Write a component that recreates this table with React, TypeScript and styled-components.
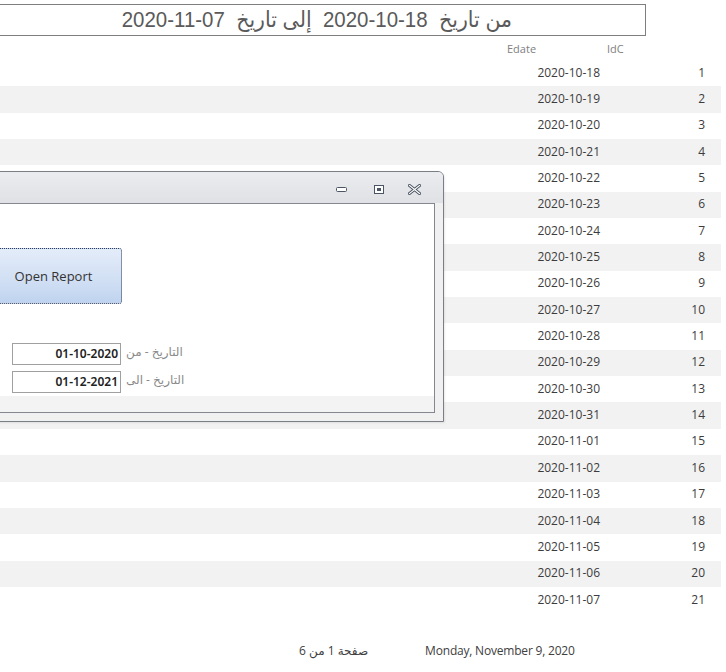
import React from "react";
import styled, { createGlobalStyle } from "styled-components";

const GlobalStyle = createGlobalStyle`
  body {
    margin: 0;
    background: #ffffff;
    font-family: "Open Sans", "DejaVu Sans", sans-serif;
  }
`;

const Page = styled.div`
  position: relative;
  width: 726px;
  height: 672px;
  overflow: hidden;
  background: #ffffff;
`;

const TitleBox = styled.div`
  margin: 4px 0 0 -12px;
  width: 658px;
  height: 32px;
  box-sizing: border-box;
  border: 1px solid #7f7f7f;
  display: flex;
  align-items: center;
  justify-content: center;
`;

const TitleText = styled.span`
  display: inline-block;
  direction: rtl;
  transform: scaleX(0.93);
  font-family: "Liberation Sans", "DejaVu Sans", sans-serif;
  font-size: 22px;
  color: #5a5a5a;
  white-space: pre;
`;

const LtrDate = styled.span`
  direction: ltr;
  unicode-bidi: isolate;
`;

const Grid = styled.div`
  width: 721px;
  display: grid;
  grid-template-columns: 1fr 100px 105px 16px;
`;

const HeaderRow = styled(Grid)`
  height: 24px;
  align-items: center;
  font-size: 11px;
  color: #808080;
  padding-top: 1px;
  box-sizing: border-box;
`;

const HeadCell = styled.div`
  padding-left: 7px;
`;

const Row = styled(Grid)<{ $striped: boolean }>`
  height: 26.35px;
  align-items: center;
  padding-bottom: 2px;
  box-sizing: border-box;
  background: ${(p) => (p.$striped ? "#f2f2f2" : "#ffffff")};
  font-size: 12px;
  color: #3c3c3c;
`;

const Cell = styled.div`
  text-align: right;
`;

const Footer = styled.div`
  margin-top: 29px;
  display: flex;
  align-items: center;
  font-size: 12px;
  color: #404040;
  white-space: nowrap;
`;

const PageNo = styled.div`
  margin-left: 299px;
  direction: rtl;
`;

const PrintDate = styled.div`
  margin-left: 57px;
  letter-spacing: -0.2px;
`;

const Dialog = styled.div`
  position: absolute;
  left: -16px;
  top: 171px;
  width: 460px;
  height: 251px;
  box-sizing: border-box;
  border: 1px solid #7a7e85;
  border-radius: 0 6px 0 0;
  background: #f0f0f0;
  display: flex;
  flex-direction: column;
  box-shadow: 1px 1px 2px rgba(0, 0, 0, 0.08);
`;

const TitleBar = styled.div`
  height: 31px;
  flex-shrink: 0;
  border-radius: 0 5px 0 0;
  background: linear-gradient(#ebecef, #dfe1e5);
  display: flex;
  align-items: center;
  justify-content: flex-end;
  padding: 3px 22px 0 0;
  box-sizing: border-box;
`;

const BarButton = styled.span<{ $gap: number }>`
  display: flex;
  margin-left: ${(p) => p.$gap}px;
`;

const Client = styled.div`
  flex: 1;
  margin: 0 8px 8px 8px;
  border: 1px solid #828790;
  background: #ffffff;
  display: flex;
  flex-direction: column;
`;

const ClientBody = styled.div`
  flex: 1;
  padding: 44px 0 0 0;
  display: flex;
  flex-direction: column;
`;

const ClientFoot = styled.div`
  height: 16px;
  background: #f3f3f3;
`;

const ReportButton = styled.button`
  margin-left: -9px;
  width: 137px;
  height: 56px;
  box-sizing: border-box;
  border: 1px dotted #2f3d58;
  border-radius: 3px;
  background: linear-gradient(#e3ecf9, #d2e0f4 55%, #bfd3ef);
  font-family: "Open Sans", sans-serif;
  font-size: 13px;
  color: #333333;
  padding: 0;
`;

const Fields = styled.div`
  margin: 39px 0 0 18px;
  display: flex;
  flex-direction: column;
  gap: 6px;
`;

const FieldRow = styled.div`
  display: flex;
  align-items: center;
  gap: 5px;
`;

const DateInput = styled.div`
  width: 109px;
  height: 22px;
  box-sizing: border-box;
  border: 1px solid #a0a0a0;
  font-family: "Noto Sans", "Open Sans", sans-serif;
  font-size: 12px;
  font-weight: 600;
  color: #222222;
  text-align: right;
  line-height: 20px;
  padding-right: 2px;
`;

const FieldLabel = styled.div`
  font-size: 12px;
  color: #8a8a8a;
  direction: rtl;
  margin-top: -6px;
`;

const MinIcon = () => (
  <svg width="11" height="6" viewBox="0 0 11 6">
    <rect x="0.5" y="1.5" width="10" height="4" rx="1" fill="#fff" stroke="#4c5564" />
  </svg>
);

const RestoreIcon = () => (
  <svg width="10" height="9" viewBox="0 0 10 9">
    <rect x="0.5" y="0.5" width="9" height="8" fill="#fff" stroke="#4c5564" />
    <rect x="3" y="3" width="4" height="3" fill="#4c5564" />
  </svg>
);

const CloseIcon = () => (
  <svg width="13" height="11" viewBox="0 0 13 11">
    <path d="M1.5 1.5 L11.5 9.5 M11.5 1.5 L1.5 9.5" stroke="#4c5564" strokeWidth="3" strokeLinecap="square" />
    <path d="M1.5 1.5 L11.5 9.5 M11.5 1.5 L1.5 9.5" stroke="#ffffff" strokeWidth="1.2" strokeLinecap="square" />
  </svg>
);

const pad = (n: number) => String(n).padStart(2, "0");

const rows = Array.from({ length: 21 }, (_, i) => {
  const d = new Date(2020, 9, 18 + i);
  return { id: i + 1, date: `${d.getFullYear()}-${pad(d.getMonth() + 1)}-${pad(d.getDate())}` };
});

export default function App() {
  return (
    <Page>
      <GlobalStyle />
      <TitleBox>
        <TitleText>
          {"من تاريخ  "}
          <LtrDate>2020-10-18</LtrDate>
          {"  إلى تاريخ  "}
          <LtrDate>2020-11-07</LtrDate>
        </TitleText>
      </TitleBox>
      <HeaderRow>
        <div />
        <HeadCell>Edate</HeadCell>
        <HeadCell>IdC</HeadCell>
        <div />
      </HeaderRow>
      {rows.map((r) => (
        <Row key={r.id} $striped={r.id % 2 === 0}>
          <div />
          <Cell>{r.date}</Cell>
          <Cell>{r.id}</Cell>
          <div />
        </Row>
      ))}
      <Footer>
        <PageNo>صفحة 1 من 6</PageNo>
        <PrintDate>Monday, November 9, 2020</PrintDate>
      </Footer>

      <Dialog>
        <TitleBar>
          <BarButton $gap={0}>
            <MinIcon />
          </BarButton>
          <BarButton $gap={27}>
            <RestoreIcon />
          </BarButton>
          <BarButton $gap={24}>
            <CloseIcon />
          </BarButton>
        </TitleBar>
        <Client>
          <ClientBody>
            <ReportButton>Open Report</ReportButton>
            <Fields>
              <FieldRow>
                <DateInput>01-10-2020</DateInput>
                <FieldLabel>التاريخ - من</FieldLabel>
              </FieldRow>
              <FieldRow>
                <DateInput>01-12-2021</DateInput>
                <FieldLabel>التاريخ - الى</FieldLabel>
              </FieldRow>
            </Fields>
          </ClientBody>
          <ClientFoot />
        </Client>
      </Dialog>
    </Page>
  );
}
